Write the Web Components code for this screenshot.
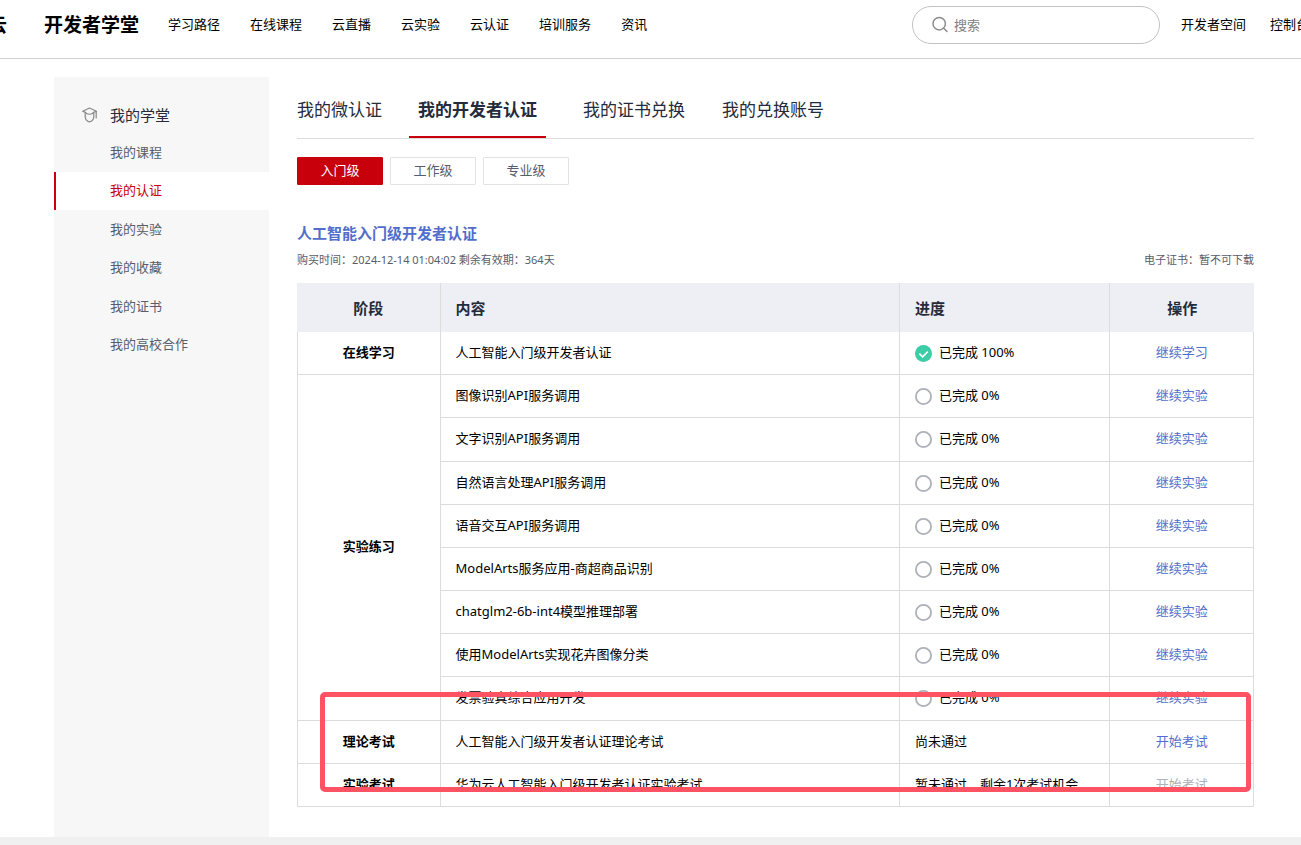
<!DOCTYPE html>
<html lang="zh-CN">
<head>
<meta charset="utf-8">
<meta name="viewport" content="width=device-width, initial-scale=1">
<title>开发者学堂</title>
<style>
  * { box-sizing: border-box; }
  body {
    margin: 0;
    background: #fff;
    color: #000;
    font: 13px/20px "Noto Sans", "Noto Sans CJK SC", sans-serif;
    --red: #c7000b;
    --blue: #526ecc;
    --ink: #252b3a;
    --muted: #575d6c;
    --line: #dcdcdc;
  }
</style>
</head>
<body>
<academy-app></academy-app>

<template id="app-tpl">
  <style>
    * { box-sizing: border-box; }
    :host { display: flex; flex-direction: column; min-height: 100vh; }
    .columns { flex: 1; display: flex; gap: 28px; padding: 18px 47px 0 54px; }
    side-menu { flex: none; width: 215px; }
    main { flex: 1; min-width: 0; padding-bottom: 30px; }
    footer { height: 8px; background: #f0f0f0; }
  </style>
  <site-header></site-header>
  <div class="columns">
    <side-menu>
      <a slot="title" href="#home">我的学堂</a>
      <menu-item>我的课程</menu-item>
      <menu-item active>我的认证</menu-item>
      <menu-item>我的实验</menu-item>
      <menu-item>我的收藏</menu-item>
      <menu-item>我的证书</menu-item>
      <menu-item>我的高校合作</menu-item>
    </side-menu>
    <main>
      <tab-bar>
        <tab-item>我的微认证</tab-item>
        <tab-item active>我的开发者认证</tab-item>
        <tab-item>我的证书兑换</tab-item>
        <tab-item>我的兑换账号</tab-item>
      </tab-bar>
      <level-bar>
        <level-button active>入门级</level-button>
        <level-button>工作级</level-button>
        <level-button>专业级</level-button>
      </level-bar>
      <cert-heading>
        <a slot="title" href="#cert">人工智能入门级开发者认证</a>
        <span slot="meta">购买时间：2024-12-14 01:04:02 剩余有效期：364天</span>
        <span slot="extra">电子证书：暂不可下载</span>
      </cert-heading>
      <cert-table></cert-table>
    </main>
  </div>
  <footer></footer>
</template>

<template id="header-tpl">
  <style>
    * { box-sizing: border-box; }
    :host { display: block; border-bottom: 1px solid #d0d0d0; overflow: hidden; }
    header { display: flex; align-items: center; height: 58px; padding-bottom: 8px; white-space: nowrap; }
    a { color: #000; text-decoration: none; }
    .brand { font-size: 19px; line-height: 28px; font-weight: 700; }
    .cloud { margin-left: -12px; margin-right: 37px; }
    nav, .user { display: flex; padding-bottom: 2px; }
    nav { gap: 30px; margin-left: 29px; }
    .user { gap: 24px; margin-right: -8px; }
    .search {
      display: flex; align-items: center; gap: 6px; width: 248px; height: 38px;
      margin-left: auto; margin-right: 21px; padding: 0 20px 0 19px;
      border: 1px solid #c3c3c3; border-radius: 19px;
    }
    .search svg { flex: none; }
    input { flex: 1; min-width: 0; padding: 0; border: 0; outline: 0; background: none; font: inherit; }
    input::placeholder { color: #808080; opacity: 1; }
  </style>
  <header>
    <a class="brand cloud" href="#cloud">云</a>
    <a class="brand" href="#academy">开发者学堂</a>
    <nav>
      <a href="#path">学习路径</a><a href="#course">在线课程</a><a href="#live">云直播</a>
      <a href="#lab">云实验</a><a href="#cert">云认证</a><a href="#train">培训服务</a><a href="#news">资讯</a>
    </nav>
    <label class="search">
      <svg width="16" height="18" viewBox="0 0 16 18" fill="none" stroke="#8c8c8c" stroke-width="1.5" stroke-linecap="round"><circle cx="7.2" cy="7.7" r="6.2"/><path d="M11.7 12.2 15 15.5"/></svg>
      <input type="text" placeholder="搜索" aria-label="搜索">
    </label>
    <div class="user"><a href="#space">开发者空间</a><a href="#console">控制台</a></div>
  </header>
</template>

<template id="menu-tpl">
  <style>
    * { box-sizing: border-box; }
    :host { display: block; background: #f7f7f7; padding-top: 20px; }
    .title { display: flex; align-items: center; gap: 12px; height: 36px; padding-left: 28px; font-size: 15px; }
    ::slotted(a) { color: var(--ink); text-decoration: none; }
    nav { display: grid; grid-auto-rows: 1fr; height: 231px; }
  </style>
  <div class="title">
    <svg width="16" height="16" viewBox="0 0 16 16" fill="none" stroke="#888" stroke-width="1.2" stroke-linejoin="round" stroke-linecap="round"><path d="M7.5 1 14.5 4.3 Q11 5 10.5 6.5 Q7.5 8 4.5 6.5 Q4 5 .7 4.3Z"/><path d="M3.2 5.5V10Q3.5 14 7.5 14.8Q11.5 14 11.8 10V6M14.2 4.5V11"/></svg>
    <slot name="title"></slot>
  </div>
  <nav><slot></slot></nav>
</template>

<template id="menu-item-tpl">
  <style>
    :host { display: grid; }
    a { display: flex; align-items: center; padding: 0 0 1px 56px; color: var(--muted); text-decoration: none; }
    :host([active]) a { padding-left: 54px; border-left: 2px solid var(--red); background: #fff; color: var(--red); }
  </style>
  <a href="#menu"><slot></slot></a>
</template>

<template id="tab-bar-tpl">
  <style>
    :host { display: flex; gap: 37px; border-bottom: 1px solid var(--line); }
  </style>
  <slot></slot>
</template>

<template id="tab-item-tpl">
  <style>
    * { box-sizing: border-box; }
    :host { display: block; }
    :host([active]) { margin-left: -10px; }
    button {
      display: block; height: 61px; padding: 6px 0 0; border: 0; border-bottom: 2px solid transparent;
      background: none; color: var(--ink); font: inherit; font-size: 17px; line-height: 24px; white-space: nowrap; cursor: pointer;
    }
    :host([active]) button { padding: 6px 9px 0; border-color: var(--red); font-weight: 700; }
  </style>
  <button type="button"><slot></slot></button>
</template>

<template id="level-bar-tpl">
  <style>:host { display: flex; gap: 7px; margin-top: 18px; }</style>
  <slot></slot>
</template>

<template id="level-button-tpl">
  <style>
    * { box-sizing: border-box; }
    :host { display: block; }
    button {
      display: block; width: 86px; height: 28px; padding: 0 0 2px; border: 1px solid #e3e3e3; border-radius: 1px;
      background: #fff; color: var(--muted); font: inherit; cursor: pointer;
    }
    :host([active]) button { background: var(--red); border-color: var(--red); color: #fff; }
  </style>
  <button type="button"><slot></slot></button>
</template>

<template id="heading-tpl">
  <style>
    :host { display: block; margin-top: 36px; }
    h2 { margin: 0; font-size: 15px; line-height: 24px; font-weight: 700; }
    ::slotted(a) { color: var(--blue); text-decoration: none; }
    .meta { display: flex; justify-content: space-between; margin-top: 6px; font-size: 11px; line-height: 18px; color: var(--muted); }
  </style>
  <h2><slot name="title"></slot></h2>
  <div class="meta"><slot name="meta"></slot><slot name="extra"></slot></div>
</template>

<template id="table-tpl">
  <style>
    * { box-sizing: border-box; }
    :host { display: block; position: relative; margin-top: 14px; }
    table { width: 100%; height: 524px; table-layout: fixed; border-spacing: 0; }
    .c-stage, .c-action { width: 15%; }
    .c-content { width: 48%; }
    .c-progress { width: 22%; }
    th, td { height: 43px; padding: 0 15px; text-align: left; border: 0 solid var(--line); border-width: 0 1px 1px 0; }
    td { padding-bottom: 2px; }
    thead th { height: 49px; background: #eeeff5; border-bottom: 0; color: var(--ink); font-size: 15px; }
    thead th:last-child { border-right: 0; }
    tbody th { border-left-width: 1px; padding-bottom: 2px; }
    tbody th, th.mid, td.mid { text-align: center; }
    a { color: var(--blue); text-decoration: none; }
    a[aria-disabled] { color: #adb0b8; }
    .frame {
      position: absolute; left: 23px; right: 3px; bottom: 15px; height: 100px;
      border: 5px solid #ff5263; border-radius: 5px; pointer-events: none;
    }
  </style>
  <table>
    <colgroup><col class="c-stage"><col class="c-content"><col class="c-progress"><col class="c-action"></colgroup>
    <thead><tr><th class="mid" scope="col">阶段</th><th scope="col">内容</th><th scope="col">进度</th><th class="mid" scope="col">操作</th></tr></thead>
    <tbody></tbody>
  </table>
  <div class="frame"></div>
</template>

<template id="progress-tpl">
  <style>
    :host { display: flex; align-items: center; gap: 7px; }
    svg { display: block; flex: none; margin-top: 3px; }
    .done, :host([complete]) .todo { display: none; }
    :host([complete]) .done { display: block; }
  </style>
  <svg class="todo" width="17" height="17" viewBox="0 0 17 17"><circle cx="8.5" cy="8.5" r="7.6" fill="#fff" stroke="#adb0b8" stroke-width="1.8"/></svg>
  <svg class="done" width="17" height="17" viewBox="0 0 17 17"><circle cx="8.5" cy="8.5" r="8.5" fill="#3dcca6"/><path d="m4.4 8.6 3.2 3.2 5.2-5.2" fill="none" stroke="#fff" stroke-width="1.6"/></svg>
  <span><slot></slot></span>
</template>

<script>
  function register(name, templateId, setup) {
    customElements.define(name, class extends HTMLElement {
      constructor() {
        super();
        const root = this.attachShadow({ mode: 'open' });
        root.append(document.getElementById(templateId).content.cloneNode(true));
        if (setup) setup(root);
      }
    });
  }

  const stages = [
    { stage: '在线学习', action: '继续学习', rows: [['人工智能入门级开发者认证', 100]] },
    { stage: '实验练习', action: '继续实验', rows: [
      ['图像识别API服务调用', 0],
      ['文字识别API服务调用', 0],
      ['自然语言处理API服务调用', 0],
      ['语音交互API服务调用', 0],
      ['ModelArts服务应用-商超商品识别', 0],
      ['chatglm2-6b-int4模型推理部署', 0],
      ['使用ModelArts实现花卉图像分类', 0],
      ['发票验真综合应用开发', 0]
    ] },
    { stage: '理论考试', action: '开始考试', rows: [['人工智能入门级开发者认证理论考试', '尚未通过']] },
    { stage: '实验考试', action: '开始考试', disabled: true, rows: [['华为云人工智能入门级开发者认证实验考试', '暂未通过，剩余1次考试机会']] }
  ];

  function progress(value) {
    if (typeof value === 'string') return value;
    return `<progress-state${value === 100 ? ' complete' : ''}>已完成 ${value}%</progress-state>`;
  }

  register('progress-state', 'progress-tpl');
  register('site-header', 'header-tpl');
  register('menu-item', 'menu-item-tpl');
  register('side-menu', 'menu-tpl');
  register('tab-item', 'tab-item-tpl');
  register('tab-bar', 'tab-bar-tpl');
  register('level-button', 'level-button-tpl');
  register('level-bar', 'level-bar-tpl');
  register('cert-heading', 'heading-tpl');
  register('cert-table', 'table-tpl', root => {
    root.querySelector('tbody').innerHTML = stages.map(s => s.rows.map(([content, state], i) => `<tr>
      ${i === 0 ? `<th scope="rowgroup" rowspan="${s.rows.length}">${s.stage}</th>` : ''}
      <td>${content}</td>
      <td>${progress(state)}</td>
      <td class="mid"><a href="#go"${s.disabled ? ' aria-disabled="true"' : ''}>${s.action}</a></td>
    </tr>`).join('')).join('');
  });
  register('academy-app', 'app-tpl');
</script>
</body>
</html>
